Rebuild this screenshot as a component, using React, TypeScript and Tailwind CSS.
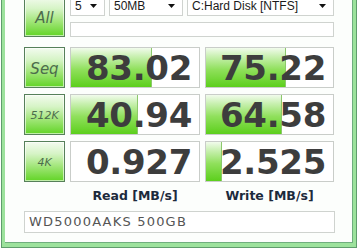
import React from "react";

// CrystalDiskMark style result window

type Row = {
  label: string;
  small?: boolean;
  read: string;
  write: string;
  readFill: number;
  writeFill: number;
};

const rows: Row[] = [
  {label: "Seq", read: "83.02", write: "75.22", readFill: 81, writeFill: 80},
  {label: "512K", small: true, read: "40.94", write: "64.58", readFill: 67, writeFill: 76},
  {label: "4K", small: true, read: "0.927", write: "2.525", readFill: 0, writeFill: 16},
];

function GreenButton({label, small}: {label: string; small?: boolean}) {
  return (
    <div className="w-[41px] h-[41px] shrink-0 border border-[#56805a] bg-[linear-gradient(to_bottom,#f3fbef_0%,#d6f4c6_30%,#a2e67a_62%,#62d426_100%)] shadow-[inset_0_0_0_1px_rgba(255,255,255,0.6)] flex items-center justify-center">
      <span
        className={
          small
            ? "italic text-[11px] text-[#4c6c4c] font-['DejaVu_Sans',sans-serif] pt-[4px]"
            : "italic text-[15px] text-[#4c6c4c] font-['DejaVu_Sans',sans-serif] pt-[4px]"
        }
      >
        {label}
      </span>
    </div>
  );
}

function ValueBox({value, fill, width}: {value: string; fill: number; width: string}) {
  return (
    <div className={`${width} h-[41px] border border-[#c9cdc9] bg-white flex`}>
      <div className="relative flex-1 flex items-center justify-end pr-[7px]">
        {fill > 0 && (
          <div
            className="absolute left-0 top-0 bottom-0 border-r border-[#8cc86c] bg-[linear-gradient(to_bottom,#f1fbec_0%,#c8f0b0_22%,#90e05c_55%,#5ccf1c_100%)]"
            style={{width: fill}}
          />
        )}
        <span className="relative text-[34px] leading-none font-bold text-[#3d3d3d] font-['DejaVu_Sans',sans-serif] tracking-[-0.3px]">
          {value}
        </span>
      </div>
    </div>
  );
}

function Dropdown({text, width}: {text: string; width: string}) {
  return (
    <div className={`${width} h-[20px] border border-[#cfd3cf] bg-white flex items-center justify-between pl-[4px] pr-[7px]`}>
      <span className="text-[12px] text-[#1a1a1a] font-['Liberation_Sans',sans-serif]">{text}</span>
      <svg width="7" height="4" viewBox="0 0 7 4">
        <path d="M0 0h7L3.5 4z" fill="#111" />
      </svg>
    </div>
  );
}

export default function App() {
  return (
    <div className="w-[359px] h-[250px] bg-white overflow-hidden pl-[1px]">
      <div className="w-[356px] h-[248px] border-l border-r border-b border-[#5f9c6c]">
        <div className="h-full border-l-[3px] border-r-[3px] border-b-[4px] border-[#9ce29c]">
          <div className="h-full border-r border-b border-[#6fae7e] bg-[#fcfefc] pl-[19px] overflow-hidden">
            {/* top: All button, dropdowns, comment bar */}
            <div className="flex gap-[5px] mt-[-4px]">
              <GreenButton label="All" />
              <div className="flex flex-col gap-[6px]">
                <div className="flex gap-[4px]">
                  <Dropdown text="5" width="w-[35px]" />
                  <Dropdown text="50MB" width="w-[74px]" />
                  <Dropdown text="C:Hard Disk [NTFS]" width="w-[147px]" />
                </div>
                <div className="w-[264px] h-[15px] border border-[#cfd3cf] bg-white" />
              </div>
            </div>

            {/* results */}
            <div className="flex flex-col gap-[6px] mt-[10px]">
              {rows.map((r) => (
                <div key={r.label} className="flex gap-[5px]">
                  <GreenButton label={r.label} small={r.small} />
                  <ValueBox value={r.read} fill={r.readFill} width="w-[130px]" />
                  <ValueBox value={r.write} fill={r.writeFill} width="w-[129px]" />
                </div>
              ))}
            </div>

            {/* column labels */}
            <div className="flex gap-[5px] h-[29px] items-center pl-[46px]">
              <div className="w-[130px] text-center text-[12.5px] font-bold text-[#1c2a3c] font-['DejaVu_Sans',sans-serif]">
                Read [MB/s]
              </div>
              <div className="w-[129px] text-center text-[12.5px] font-bold text-[#1c2a3c] font-['DejaVu_Sans',sans-serif]">
                Write [MB/s]
              </div>
            </div>

            {/* drive name */}
            <div className="w-[311px] h-[22px] border border-[#cfd3cf] bg-white flex items-center pl-[4px]">
              <span className="text-[13px] tracking-[1.2px] text-[#555] font-['DejaVu_Sans',sans-serif]">
                WD5000AAKS 500GB
              </span>
            </div>
          </div>
        </div>
      </div>
    </div>
  );
}
